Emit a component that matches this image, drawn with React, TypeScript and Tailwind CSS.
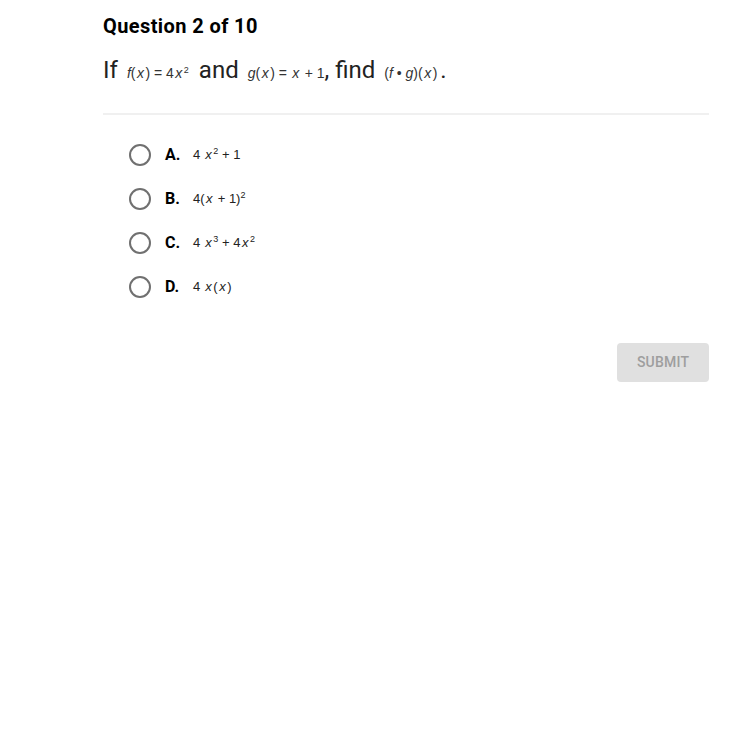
import React from "react";

const mathFont = { fontFamily: '"Liberation Sans", Arial, sans-serif' };

function X() {
    return <span className="mx-[1.5px] italic">x</span>;
}

function Sup({ children }: { children: React.ReactNode }) {
    return <span className="relative -top-[5px] text-[9px] leading-none">{children}</span>;
}

const options: { letter: string; math: React.ReactNode }[] = [
    {
        letter: "A.",
        math: (
            <>
                4 <X />
                <Sup>2</Sup> + 1
            </>
        ),
    },
    {
        letter: "B.",
        math: (
            <>
                4(<X /> + 1)<Sup>2</Sup>
            </>
        ),
    },
    {
        letter: "C.",
        math: (
            <>
                4 <X />
                <Sup>3</Sup> + 4<X />
                <Sup>2</Sup>
            </>
        ),
    },
    {
        letter: "D.",
        math: (
            <>
                4 <X />(<X />)
            </>
        ),
    },
];

export default function App() {
    return (
        <div
            className="h-[750px] w-[750px] bg-white text-[#1a1a1a]"
            style={{ fontFamily: 'Roboto, "Noto Sans", sans-serif' }}
        >
            <div className="ml-[103px] w-[606px] pt-[14px]">
                <h1 className="h-[24px] text-[20px] font-bold leading-[24px] tracking-[0.4px] text-black">
                    Question 2 of 10
                </h1>
                <p className="mt-[17px] flex h-[30px] items-baseline whitespace-nowrap text-[24px] leading-[30px] text-[#222]">
                    <span>If</span>
                    <span className="ml-[9px] text-[14px] text-[#333]" style={mathFont}>
                        <span className="italic">f</span>(<X />) = 4<X />
                        <Sup>2</Sup>
                    </span>
                    <span className="ml-[10px]">and</span>
                    <span className="ml-[9px] text-[14px] text-[#333]" style={mathFont}>
                        <span className="italic">g</span>(<X />) = <X /> + 1
                    </span>
                    <span>, find</span>
                    <span className="ml-[9px] text-[14px] text-[#333]" style={mathFont}>
                        (<span className="italic">f</span> • <span className="italic">g</span>)(<X />)
                    </span>
                    <span className="ml-[3px]">.</span>
                </p>
                <div className="mt-[28px] h-[2px] bg-[#f0f0f0]" />

                <ul className="mt-[28px] ml-[26px] flex flex-col gap-[20px]">
                    {options.map((opt) => (
                        <li key={opt.letter} className="flex h-[24px] items-center">
                            <span className="h-[22px] w-[22px] rounded-full border-2 border-[#707070]" />
                            <span className="ml-[14px] w-[28px] text-[16px] font-bold text-black">{opt.letter}</span>
                            <span className="text-[13px] text-[#222]" style={mathFont}>
                                {opt.math}
                            </span>
                        </li>
                    ))}
                </ul>

                <div className="mt-[44px] flex justify-end">
                    <button
                        type="button"
                        className="h-[39px] w-[92px] rounded-[4px] bg-[#e0e0e0] text-[14px] font-medium tracking-[0.2px] text-[#9e9e9e]"
                    >
                        SUBMIT
                    </button>
                </div>
            </div>
        </div>
    );
}
